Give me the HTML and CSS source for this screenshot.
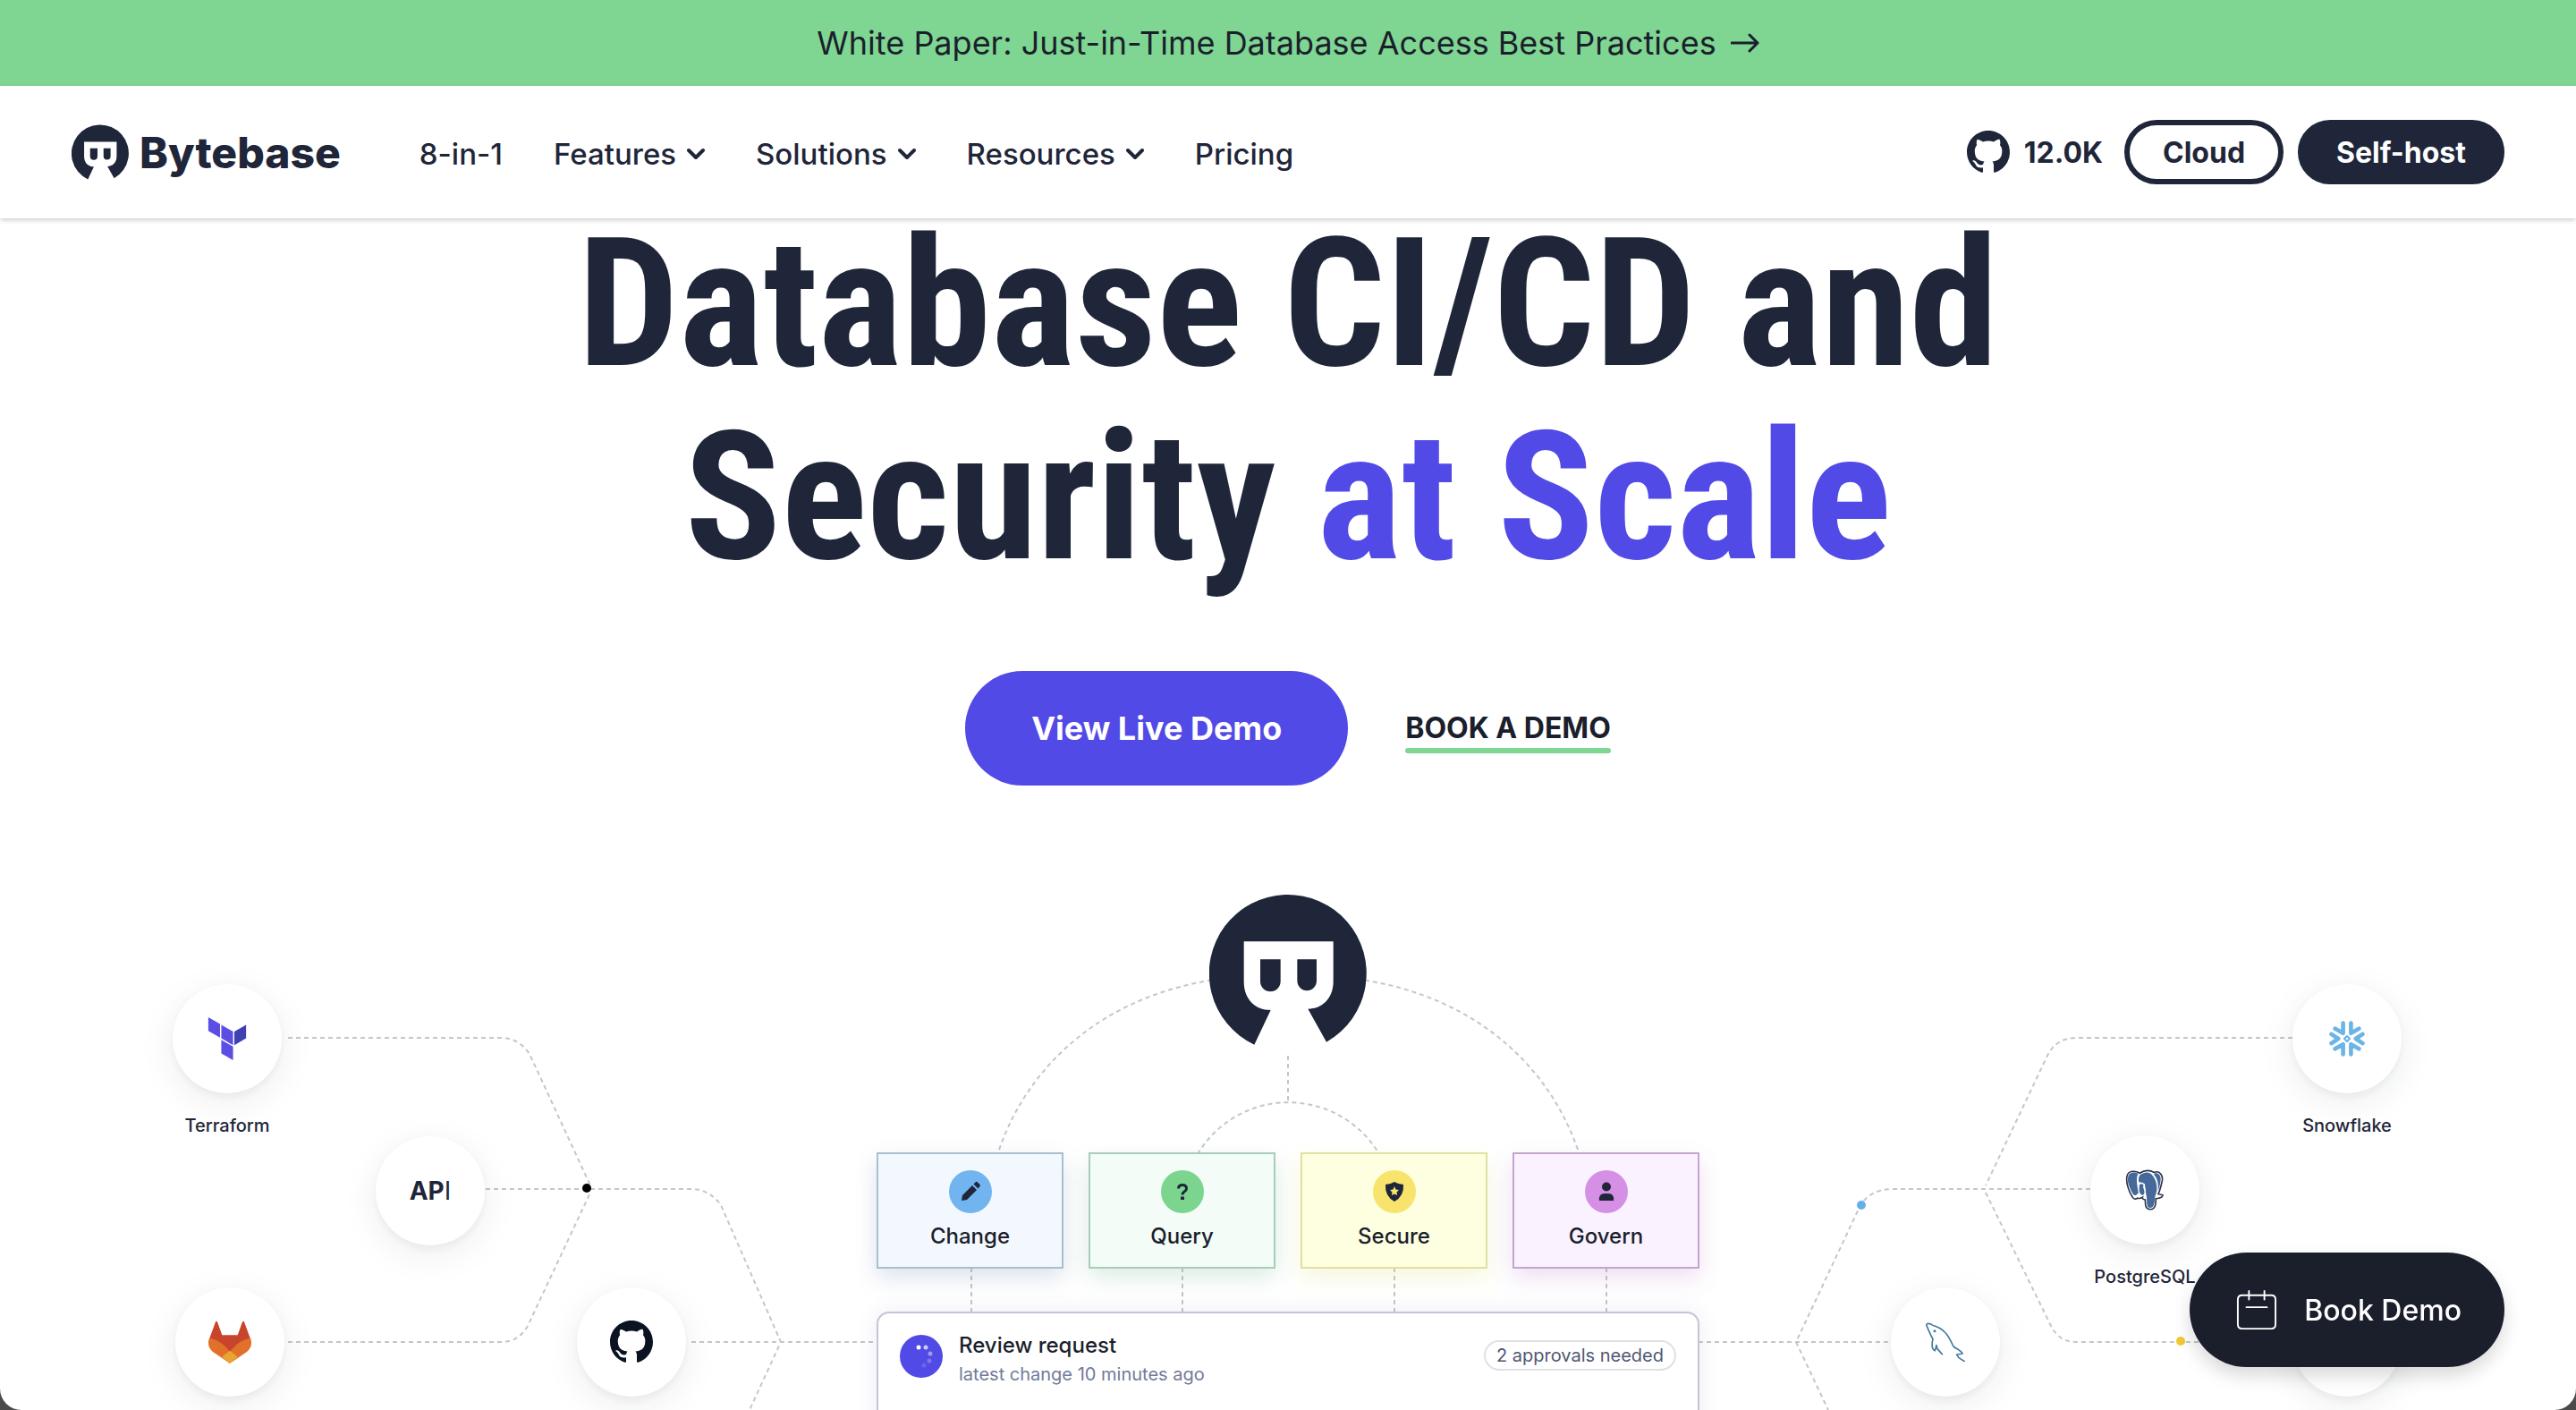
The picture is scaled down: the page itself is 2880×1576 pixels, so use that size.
FILE: index.html
```html
<!DOCTYPE html>
<html lang="en">
<head>
<meta charset="utf-8">
<meta name="viewport" content="width=device-width, initial-scale=1">
<title>Bytebase</title>
<link rel="stylesheet" href="styles.css">
</head>
<body>
<svg class="sprite" aria-hidden="true">
  <symbol id="bytebase" viewBox="96 59 528 504">
    <path fill="currentColor" fill-rule="evenodd" d="M247 562A264 264 0 1 1 489 553L427 442C476 442 512 405 512 350V216H212V350C212 408 248 446 302 446ZM267 276H335V350A34 34 0 0 1 267 350ZM391 276H456V348A32.500 32.500 0 0 1 391 348Z"/>
  </symbol>
  <symbol id="github" viewBox="0 0 16 16">
    <path fill="currentColor" d="M8 0C3.580 0 0 3.580 0 8c0 3.540 2.290 6.530 5.470 7.590.4.070.55-.17.55-.38 0-.19-.01-.82-.01-1.490-2.010.37-2.530-.49-2.690-.94-.09-.23-.48-.94-.82-1.130-.28-.15-.68-.52-.01-.53.63-.01 1.080.58 1.230.82.720 1.210 1.870.87 2.330.66.070-.52.280-.87.510-1.070-1.780-.2-3.640-.89-3.640-3.950 0-.87.310-1.590.82-2.150-.08-.2-.36-1.020.080-2.120 0 0 .67-.21 2.200.82.640-.18 1.320-.27 2-.27s1.360.090 2 .27c1.530-1.040 2.200-.82 2.200-.82.440 1.100.160 1.920.080 2.120.510.56.820 1.270.820 2.150 0 3.070-1.870 3.750-3.650 3.950.290.250.540.730.540 1.480 0 1.070-.01 1.930-.01 2.200 0 .210.150.460.550.380A8.010 8.010 0 0 0 16 8c0-4.420-3.580-8-8-8"/>
  </symbol>
  <symbol id="chevron" viewBox="0 0 20 14">
    <path fill="none" stroke="currentColor" stroke-width="4" stroke-linecap="round" stroke-linejoin="round" d="M2 3l8 8 8-8"/>
  </symbol>
</svg>

<a class="banner" href="#white-paper">
  <span>White Paper: Just-in-Time Database Access Best Practices</span>
  <svg class="banner-arrow" viewBox="0 0 32 22"><path d="M1 11H30M21 2l9 9-9 9"/></svg>
</a>

<header class="header">
  <a class="brand" href="#home">
    <svg class="brand-mark"><use href="#bytebase"/></svg>
    <span>Bytebase</span>
  </a>
  <nav class="nav">
    <a href="#8-in-1">8-in-1</a>
    <button type="button">Features <svg class="chevron"><use href="#chevron"/></svg></button>
    <button type="button">Solutions <svg class="chevron"><use href="#chevron"/></svg></button>
    <button type="button">Resources <svg class="chevron"><use href="#chevron"/></svg></button>
    <a href="#pricing">Pricing</a>
  </nav>
  <div class="actions">
    <a class="stars" href="#github"><svg class="stars-icon"><use href="#github"/></svg>12.0K</a>
    <a class="pill pill-outline" href="#cloud">Cloud</a>
    <a class="pill pill-solid" href="#self-host">Self-host</a>
  </div>
</header>

<main class="main">
  <section class="hero">
    <h1>Database CI/CD and<br>Security <em>at Scale</em></h1>
    <div class="cta">
      <a class="cta-main" href="#live">View Live Demo</a>
      <a class="cta-link" href="#book">BOOK A DEMO</a>
    </div>
  </section>

  <section class="diagram">
    <svg class="wires" viewBox="160 980 2560 596" aria-hidden="true">
      <g>
        <path d="M1117 1285C1150 1190 1232 1116 1352 1096"/>
        <path d="M1764 1285C1731 1190 1649 1116 1528 1096"/>
        <path d="M1440 1180V1231M1339 1290A118 118 0 0 1 1542 1290"/>
        <path d="M1086 1417V1466M1322 1417V1466M1559 1417V1466M1796 1417V1466"/>
        <path d="M322 1160H560Q580 1160 592 1178L660 1325"/>
        <path d="M543 1329H773Q793 1329 806 1347L873 1500L838 1576"/>
        <path d="M322 1500H560Q580 1500 590 1482L660 1333"/>
        <path d="M773 1500H981M1899 1500H2114"/>
        <path d="M2563 1160H2321Q2299 1160 2289 1180L2220 1325"/>
        <path d="M2337 1329H2116Q2092 1329 2080 1347L2008 1500L2044 1576"/>
        <path d="M2220 1333L2293 1482Q2302 1500 2321 1500H2563"/>
      </g>
      <circle cx="656" cy="1328" r="5" fill="#000"/>
      <circle cx="2081" cy="1347" r="5" fill="#64b0e6"/>
      <circle cx="2438" cy="1499" r="5" fill="#f0c830"/>
    </svg>

    <figure class="node terraform">
      <div class="disc"><svg width="48" height="48" viewBox="0 0 24 24"><path fill="#5c4ee5" d="M1.440 0v7.575l6.561 3.790V3.787zM8.720 4.230v7.575l6.561 3.787V8.018zm0 8.405v7.575L15.280 24v-7.578z"/><path fill="#4040b2" d="M22.560 4.227l-6.561 3.791v7.574l6.560-3.787z"/></svg></div>
      <figcaption>Terraform</figcaption>
    </figure>
    <figure class="node api"><div class="disc disc-text"><span><b>AP</b>I</span></div></figure>
    <figure class="node gitlab">
      <div class="disc"><svg width="48" height="48" viewBox="0 0 47 47"><path fill="#c8452b" d="M8 1Q9 0 10 2L15 16H32L37 2Q38 0 39 1L46 20 24 35 1 20Z"/><path fill="#e1702b" d="M1 19C11 21 18 27 23.500 34C29 27 36 21 46 19C49 27 45 32 41 35L23.500 47L6 35C2 32-2 27 1 19Z"/><path fill="#e8a534" d="M23.500 33Q28 36 32 40L23.500 47L15 40Q19 36 23.500 33Z"/></svg></div>
    </figure>
    <figure class="node git-hub"><div class="disc"><svg width="48" height="48"><use href="#github"/></svg></div></figure>
    <figure class="node snowflake">
      <div class="disc"><svg width="40" height="40" viewBox="0 0 39 39" fill="none" stroke="#6bb4e6" stroke-width="4.500" stroke-linecap="round" stroke-linejoin="round"><path d="M2.500 14.500L10 19.500 2.500 24.500M36.500 14.500L29 19.500 36.500 24.500M6.500 8.500L15.200 13.500V2.500M32.500 8.500L23.800 13.500V2.500M6.500 30.500L15.200 25.500V36.500M32.500 30.500L23.800 25.500V36.500"/><path stroke-width="2" d="M19.500 16.500L22.500 19.500 19.500 22.500 16.500 19.500Z"/></svg></div>
      <figcaption>Snowflake</figcaption>
    </figure>
    <figure class="node postgres">
      <div class="disc"><svg width="44" height="46" viewBox="40 35 132 142"><path d="M44 60C48 36 75 40 88 48C110 34 128 40 138 46C158 36 172 60 164 82C160 100 156 112 152 120L168 124Q168 134 144 136C144 156 142 174 124 173C106 172 108 156 107 140Q96 138 98 131Q86 138 80 134C68 144 62 130 55 116C48 100 40 82 44 60Z" fill="#fff" stroke="#2d3348" stroke-width="5"/><path fill="#44699a" d="M48 62C52 42 74 44 83 51C73 64 81 98 84 116C72 130 68 126 61 114C53 96 44 78 48 62Z"/><path fill="#44699a" d="M89 54C108 42 124 44 133 57C143 70 149 84 147 110L141 130C139 153 138 168 124 168C110 168 114 148 112 130C108 112 110 106 106 92C110 84 96 78 86 80C82 70 85 60 89 54Z"/><path fill="#44699a" d="M140 49C158 45 164 66 159 82C157 96 153 104 151 108C154 86 149 66 137 53Z"/><path fill="#44699a" d="M87 88C96 82 104 86 100 96C104 110 108 116 100 124C84 122 86 104 87 88Z"/></svg></div>
      <figcaption>PostgreSQL</figcaption>
    </figure>
    <figure class="node mysql">
      <div class="disc"><svg width="44" height="44" viewBox="37 39 132 132" fill="none" stroke="#447a9c" stroke-width="5" stroke-linecap="round" stroke-linejoin="round"><path d="M92 146L76 128 73 116 68 134C58 130 56 116 61 95C54 84 48 68 40 50C38 42 46 42 56 46C64 52 66 50 74 54C104 66 116 90 130 120Q140 128 146 130 162 142 160 144L141 147 148 158 167 170"/><circle cx="67" cy="68" r="2"/></svg></div>
    </figure>
    <figure class="node fourth"><div class="disc"></div></figure>

    <div class="core">
      <svg class="core-logo"><use href="#bytebase"/></svg>
      <ul class="cards">
        <li class="card change"><svg class="badge" viewBox="0 0 48 48"><circle cx="24" cy="24" r="24"/><path d="M14 34L15 28 26 17 31 22 20 33ZM27.500 15.500L30 13Q31 12.500 32 13.500L34.500 16Q35.500 17 34.500 18L32.500 20.500Z"/></svg>Change</li>
        <li class="card query"><svg class="badge" viewBox="0 0 48 48"><circle cx="24" cy="24" r="24"/><path class="mark" d="M19.500 20.500Q19.500 16.500 24 16.500 28.500 16.500 28.500 20.500 28.500 22.500 26 24 24 25.200 24 27.500"/><path d="M22 29.500h4v3.500h-4z"/></svg>Query</li>
        <li class="card secure"><svg class="badge" viewBox="0 0 48 48"><circle cx="24" cy="24" r="24"/><path fill-rule="evenodd" d="M24 13Q29 16 34 16 35 29 24 35 13 29 14 16 19 16 24 13ZM24 18L25.500 21.500 29 22 26.500 24.500 27 28 24 26.500 21 28 21.500 24.500 19 22 22.500 21.500Z"/></svg>Secure</li>
        <li class="card govern"><svg class="badge" viewBox="0 0 48 48"><circle cx="24" cy="24" r="24"/><path d="M24 13.500a5 5 0 0 1 0 10a5 5 0 0 1 0-10ZM16 34Q15 26 22 26H26Q33 26 32 34Z"/></svg>Govern</li>
      </ul>
      <article class="review">
        <svg class="spinner" viewBox="0 0 48 48"><circle cx="24" cy="24" r="24" fill="#524ae6"/><g fill="#fff"><circle cx="21" cy="14" r="2.500"/><circle cx="29" cy="14" r="2.500" opacity=".7"/><circle cx="34" cy="21" r="2.500" opacity=".45"/><circle cx="33" cy="29" r="2.500" opacity=".25"/><circle cx="27" cy="34" r="2.500" opacity=".15"/></g></svg>
        <div class="review-text">
          <h2>Review request</h2>
          <p>latest change 10 minutes ago</p>
        </div>
        <span class="approvals">2 approvals needed</span>
      </article>
    </div>
  </section>
</main>

<button class="book" type="button">
  <svg class="book-icon" viewBox="0 0 48 48"><path d="M7 7H41Q46 7 46 12V41Q46 46 41 46H7Q2 46 2 41V12Q2 7 7 7ZM15 2V12M33 2V12M12 21H36"/></svg>
  Book Demo
</button>
</body>
</html>
```
FILE: styles.css
```css
* { box-sizing: border-box; }

html { height: 100%; background: #4a4a4a; }

body {
  margin: 0;
  height: 100%;
  display: flex;
  flex-direction: column;
  overflow: hidden;
  background: #fff;
  border-radius: 0 0 24px 24px;
  color: #1f2639;
  font-family: Inter, "Liberation Sans", sans-serif;
}

a { color: inherit; text-decoration: none; }
button { font: inherit; color: inherit; border: 0; padding: 0; background: none; }
h1, h2, p, ul, figure { margin: 0; padding: 0; }
.sprite { display: none; }

/* Announcement */
.banner {
  flex: none;
  height: 96px;
  display: flex;
  align-items: center;
  justify-content: center;
  gap: 16px;
  background: #7fd692;
  color: #1b1f2c;
  font-size: 36px;
}
.banner-arrow {
  width: 32px;
  height: 22px;
  fill: none;
  stroke: currentColor;
  stroke-width: 3;
  stroke-linecap: round;
  stroke-linejoin: round;
}

/* Header */
.header {
  flex: none;
  position: relative;
  z-index: 2;
  height: 148px;
  padding: 0 80px;
  display: flex;
  align-items: center;
  background: #fff;
  box-shadow: 0 2px 6px rgba(0, 0, 0, .2);
}
.brand {
  display: flex;
  align-items: center;
  gap: 12px;
  margin-right: 88px;
  font-size: 48px;
  font-weight: 800;
}
.brand-mark { width: 64px; height: 62px; }
.nav { display: flex; align-items: center; gap: 57px; padding-top: 3px; font-size: 33px; font-weight: 500; }
.nav button { display: flex; align-items: center; gap: 12px; }
.chevron { width: 20px; height: 14px; }
.actions { display: flex; align-items: center; gap: 16px; margin-left: auto; font-size: 32px; font-weight: 700; }
.stars { display: flex; align-items: center; gap: 16px; margin-right: 8px; }
.stars-icon { width: 48px; height: 48px; }
.pill {
  height: 72px;
  display: flex;
  align-items: center;
  padding: 0 37px;
  border: 6px solid #1f2639;
  border-radius: 36px;
}
.pill-solid { background: #1f2639; color: #fff; }

/* Hero */
.main { flex: 1; min-height: 0; display: flex; flex-direction: column; }
.hero { flex: none; padding: 0 80px 102px; }
h1 {
  margin-top: -12px;
  text-align: center;
  font-family: "Roboto Condensed", "Liberation Sans Narrow", Roboto, sans-serif;
  font-size: 200px;
  line-height: 216px;
  font-weight: 700;
}
h1 em { font-style: normal; color: #524ae6; }
.cta { display: flex; justify-content: center; align-items: center; gap: 64px; margin-top: 86px; }
.cta-main {
  height: 128px;
  display: flex;
  align-items: center;
  padding: 0 74px;
  border-radius: 64px;
  background: #524ae6;
  color: #fff;
  font-size: 36px;
  font-weight: 700;
}
.cta-link {
  padding-top: 8px;
  color: #1b1f2c;
  font-size: 32px;
  line-height: 40px;
  font-weight: 700;
}
.cta-link::after {
  content: "";
  display: block;
  height: 6px;
  margin-top: 2px;
  border-radius: 3px;
  background: #7fd692;
}

/* Diagram: nodes placed on a free canvas */
.diagram { flex: 1; min-height: 0; overflow-y: clip; position: relative; width: 2560px; margin: 0 auto; padding-top: 20px; }
.wires { position: absolute; left: 0; top: 0; width: 2560px; height: 596px; }
.wires g { fill: none; stroke: #c4c6cc; stroke-width: 2; stroke-dasharray: 5 4; }

.node { position: absolute; width: 122px; display: flex; flex-direction: column; align-items: center; gap: 22px; }
.disc {
  width: 122px;
  height: 122px;
  display: flex;
  align-items: center;
  justify-content: center;
  flex: none;
  border-radius: 50%;
  background: #fff;
  box-shadow: 0 10px 40px rgba(31, 38, 57, .08), 0 4px 8px rgba(31, 38, 57, .05);
}
.disc-text { font-size: 28px; }
.disc-text b { font-weight: 700; }
figcaption { font-size: 20px; line-height: 28px; font-weight: 500; white-space: nowrap; }
.terraform { left: 33px; top: 120px; }
.api { left: 260px; top: 290px; }
.gitlab { left: 36px; top: 459px; }
.git-hub { left: 485px; top: 459px; color: #0b1222; }
.snowflake { left: 2403px; top: 120px; }
.postgres { left: 2177px; top: 289px; }
.mysql { left: 1954px; top: 459px; }
.fourth { left: 2403px; top: 459px; }

.core { position: relative; width: 920px; margin: 0 auto; display: flex; flex-direction: column; align-items: center; }
.core-logo { width: 176px; height: 168px; }
.cards {
  width: 100%;
  margin-top: 120px;
  display: grid;
  grid-template-columns: repeat(4, 1fr);
  gap: 28px;
  list-style: none;
}
.card {
  height: 130px;
  display: flex;
  flex-direction: column;
  align-items: center;
  padding-top: 18px;
  gap: 10px;
  border: 2px solid;
  color: #1b1f2c;
  font-size: 24px;
  line-height: 32px;
  font-weight: 500;
}
.badge { width: 48px; height: 48px; fill: #1f2639; flex: none; }
.badge .mark { fill: none; stroke: #1f2639; stroke-width: 3; }
.change { background: #f3f8fe; border-color: #a9bfce; box-shadow: 0 10px 24px rgba(80, 110, 160, .2); }
.change circle { fill: #72b4f0; }
.query { background: #f3fcf7; border-color: #a9cdb9; box-shadow: 0 10px 24px rgba(80, 160, 120, .2); }
.query circle { fill: #7bd58f; }
.secure { background: #feffe0; border-color: #e0e0a0; box-shadow: 0 10px 24px rgba(210, 210, 80, .2); }
.secure circle { fill: #f8e36c; }
.govern { background: #faf2ff; border-color: #c5a4d0; box-shadow: 0 10px 24px rgba(170, 90, 190, .2); }
.govern circle { fill: #d590e6; }

.review {
  width: 100%;
  height: 260px;
  margin-top: 48px;
  padding: 20px 24px;
  display: flex;
  align-items: flex-start;
  border: 2px solid #c3c5d4;
  border-radius: 14px;
  background: #fff;
  box-shadow: 0 0 24px rgba(80, 80, 160, .1);
}
.spinner { width: 48px; height: 48px; margin: 4px 18px 0 0; }
.review h2 { font-size: 24px; line-height: 32px; font-weight: 500; color: #1b1f2c; }
.review p { font-size: 20px; line-height: 32px; color: #727a99; }
.approvals {
  margin: 10px 0 0 auto;
  padding: 0 12px;
  border: 2px solid #e0e1e8;
  border-radius: 17px;
  font-size: 20px;
  line-height: 30px;
  color: #505773;
}

/* Floating action */
.book {
  position: fixed;
  right: 80px;
  bottom: 48px;
  z-index: 3;
  height: 128px;
  display: flex;
  align-items: center;
  gap: 30px;
  padding: 0 48px 0 52px;
  border-radius: 64px;
  background: #1b1f2c;
  color: #fff;
  font-size: 32px;
  font-weight: 500;
  box-shadow: 0 10px 20px rgba(0, 0, 0, .15);
}
.book-icon { width: 46px; height: 46px; fill: none; stroke: #fff; stroke-width: 2; stroke-linecap: round; }
```
